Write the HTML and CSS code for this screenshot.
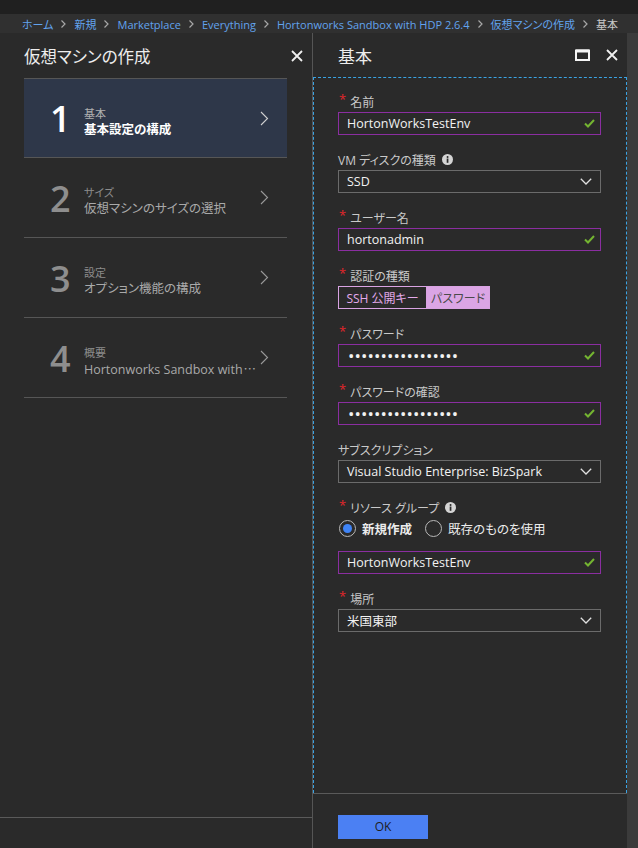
FILE: index.html
```html
<!DOCTYPE html>
<html lang="ja">
<head>
<meta charset="utf-8">
<title>仮想マシンの作成</title>
<link rel="stylesheet" href="styles.css">
</head>
<body>
<div class="app">
  <div class="topbar"></div>
  <nav class="crumbs">
    <a class="crumb">ホーム</a><span class="sep"><svg width="5" height="8" viewBox="0 0 5 8"><path d="M0.5 0.5 L4 4 L0.5 7.5" fill="none" stroke="#a8a8a8" stroke-width="1.2"/></svg></span>
    <a class="crumb">新規</a><span class="sep"><svg width="5" height="8" viewBox="0 0 5 8"><path d="M0.5 0.5 L4 4 L0.5 7.5" fill="none" stroke="#a8a8a8" stroke-width="1.2"/></svg></span>
    <a class="crumb">Marketplace</a><span class="sep"><svg width="5" height="8" viewBox="0 0 5 8"><path d="M0.5 0.5 L4 4 L0.5 7.5" fill="none" stroke="#a8a8a8" stroke-width="1.2"/></svg></span>
    <a class="crumb">Everything</a><span class="sep"><svg width="5" height="8" viewBox="0 0 5 8"><path d="M0.5 0.5 L4 4 L0.5 7.5" fill="none" stroke="#a8a8a8" stroke-width="1.2"/></svg></span>
    <a class="crumb">Hortonworks Sandbox with HDP 2.6.4</a><span class="sep"><svg width="5" height="8" viewBox="0 0 5 8"><path d="M0.5 0.5 L4 4 L0.5 7.5" fill="none" stroke="#a8a8a8" stroke-width="1.2"/></svg></span>
    <a class="crumb">仮想マシンの作成</a><span class="sep"><svg width="5" height="8" viewBox="0 0 5 8"><path d="M0.5 0.5 L4 4 L0.5 7.5" fill="none" stroke="#a8a8a8" stroke-width="1.2"/></svg></span>
    <span class="crumb current">基本</span>
  </nav>
  <div class="main">
    <section class="blade blade-left">
      <header class="blade-head">
        <h1 class="blade-title left-title">仮想マシンの作成</h1>
        <span class="icon-btn close-left"><svg width="12" height="12" viewBox="0 0 12 12"><path d="M1 1 L11 11 M11 1 L1 11" stroke="#f0f0f0" stroke-width="1.8"/></svg></span>
      </header>
      <ol class="steps">
        <li class="step active">
          <span class="step-num">1</span>
          <div class="step-text"><span class="step-kicker">基本</span><span class="step-main">基本設定の構成</span></div>
          <svg class="step-chev" width="9" height="15" viewBox="0 0 9 15"><path d="M1 1 L7.5 7.5 L1 14" fill="none" stroke="#d0d0d0" stroke-width="1.1"/></svg>
        </li>
        <li class="step">
          <span class="step-num">2</span>
          <div class="step-text"><span class="step-kicker">サイズ</span><span class="step-main">仮想マシンのサイズの選択</span></div>
          <svg class="step-chev" width="9" height="15" viewBox="0 0 9 15"><path d="M1 1 L7.5 7.5 L1 14" fill="none" stroke="#9a9a9a" stroke-width="1.1"/></svg>
        </li>
        <li class="step">
          <span class="step-num">3</span>
          <div class="step-text"><span class="step-kicker">設定</span><span class="step-main">オプション機能の構成</span></div>
          <svg class="step-chev" width="9" height="15" viewBox="0 0 9 15"><path d="M1 1 L7.5 7.5 L1 14" fill="none" stroke="#9a9a9a" stroke-width="1.1"/></svg>
        </li>
        <li class="step">
          <span class="step-num">4</span>
          <div class="step-text"><span class="step-kicker">概要</span><span class="step-main">Hortonworks Sandbox with<span class="ell">…</span></span></div>
          <svg class="step-chev" width="9" height="15" viewBox="0 0 9 15"><path d="M1 1 L7.5 7.5 L1 14" fill="none" stroke="#9a9a9a" stroke-width="1.1"/></svg>
        </li>
      </ol>
      <div class="left-spacer"></div>
      <div class="left-foot"></div>
    </section>
    <div class="divider"></div>
    <section class="blade blade-right">
      <header class="blade-head right-head">
        <h2 class="blade-title right-title">基本</h2>
        <div class="head-icons">
          <span class="icon-btn"><svg width="15" height="12" viewBox="0 0 15 12"><rect x="1" y="1.5" width="13" height="9.5" fill="none" stroke="#f5f5f5" stroke-width="2"/><rect x="1" y="0.5" width="13" height="3" fill="#f5f5f5"/></svg></span>
          <span class="icon-btn"><svg width="12" height="12" viewBox="0 0 12 12"><path d="M1 1 L11 11 M11 1 L1 11" stroke="#f0f0f0" stroke-width="1.8"/></svg></span>
        </div>
      </header>
      <div class="form-area">
        <div class="field">
          <label class="label"><span class="req">*</span>名前</label>
          <div class="input valid"><span class="value">HortonWorksTestEnv</span><svg class="check" width="11" height="9" viewBox="0 0 11 9"><path d="M1 4.5 L4 7.5 L10 1" fill="none" stroke="#74b531" stroke-width="2"/></svg></div>
        </div>
        <div class="field">
          <label class="label plain">VM ディスクの種類<svg class="info" width="11" height="11" viewBox="0 0 11 11"><circle cx="5.5" cy="5.5" r="5.5" fill="#d4d4d4"/><rect x="4.7" y="4.5" width="1.7" height="4.3" fill="#2a2a2a"/><circle cx="5.55" cy="2.9" r="1" fill="#2a2a2a"/></svg></label>
          <div class="input select"><span class="value">SSD</span><svg class="chev-down" width="12" height="7" viewBox="0 0 12 7"><path d="M0.8 0.8 L6 6 L11.2 0.8" fill="none" stroke="#e0e0e0" stroke-width="1.3"/></svg></div>
        </div>
        <div class="field">
          <label class="label"><span class="req">*</span>ユーザー名</label>
          <div class="input valid"><span class="value">hortonadmin</span><svg class="check" width="11" height="9" viewBox="0 0 11 9"><path d="M1 4.5 L4 7.5 L10 1" fill="none" stroke="#74b531" stroke-width="2"/></svg></div>
        </div>
        <div class="field">
          <label class="label"><span class="req">*</span>認証の種類</label>
          <div class="toggle"><span class="opt">SSH 公開キー</span><span class="opt on">パスワード</span></div>
        </div>
        <div class="field">
          <label class="label"><span class="req">*</span>パスワード</label>
          <div class="input valid"><span class="value dots">•••••••••••••••••</span><svg class="check" width="11" height="9" viewBox="0 0 11 9"><path d="M1 4.5 L4 7.5 L10 1" fill="none" stroke="#74b531" stroke-width="2"/></svg></div>
        </div>
        <div class="field">
          <label class="label"><span class="req">*</span>パスワードの確認</label>
          <div class="input valid"><span class="value dots">•••••••••••••••••</span><svg class="check" width="11" height="9" viewBox="0 0 11 9"><path d="M1 4.5 L4 7.5 L10 1" fill="none" stroke="#74b531" stroke-width="2"/></svg></div>
        </div>
        <div class="field">
          <label class="label plain">サブスクリプション</label>
          <div class="input select"><span class="value">Visual Studio Enterprise: BizSpark</span><svg class="chev-down" width="12" height="7" viewBox="0 0 12 7"><path d="M0.8 0.8 L6 6 L11.2 0.8" fill="none" stroke="#e0e0e0" stroke-width="1.3"/></svg></div>
        </div>
        <div class="field">
          <label class="label"><span class="req">*</span>リソース グループ<svg class="info" width="11" height="11" viewBox="0 0 11 11"><circle cx="5.5" cy="5.5" r="5.5" fill="#d4d4d4"/><rect x="4.7" y="4.5" width="1.7" height="4.3" fill="#2a2a2a"/><circle cx="5.55" cy="2.9" r="1" fill="#2a2a2a"/></svg></label>
          <div class="radios">
            <span class="radio checked"><span class="dot"></span>新規作成</span>
            <span class="radio"><span class="dot"></span>既存のものを使用</span>
          </div>
          <div class="input valid"><span class="value">HortonWorksTestEnv</span><svg class="check" width="11" height="9" viewBox="0 0 11 9"><path d="M1 4.5 L4 7.5 L10 1" fill="none" stroke="#74b531" stroke-width="2"/></svg></div>
        </div>
        <div class="field">
          <label class="label"><span class="req">*</span>場所</label>
          <div class="input select"><span class="value">米国東部</span><svg class="chev-down" width="12" height="7" viewBox="0 0 12 7"><path d="M0.8 0.8 L6 6 L11.2 0.8" fill="none" stroke="#e0e0e0" stroke-width="1.3"/></svg></div>
        </div>
      </div>
      <footer class="form-foot">
        <button class="ok">OK</button>
      </footer>
    </section>
    <div class="scrollbar"></div>
  </div>
</div>
</body>
</html>
```

FILE: styles.css
```css
* { box-sizing: border-box; }
html, body { margin: 0; padding: 0; }
body {
  width: 638px;
  height: 848px;
  overflow: hidden;
  background: #2a2a2a;
  color: #e6e6e6;
  font-family: "Open Sans", "Noto Sans CJK JP", sans-serif;
  font-feature-settings: "palt" 1;
}
.app { display: flex; flex-direction: column; height: 848px; }
.topbar { height: 14px; background: #202020; flex: none; }
.crumbs {
  height: 19px;
  flex: none;
  background: #303030;
  display: flex;
  align-items: center;
  padding: 1px 0 0 22px;
  font-size: 11px;
  white-space: nowrap;
  overflow: hidden;
}
.crumb { color: #62a3ee; }
.crumb.current { color: #c8c8c8; }
.sep { display: inline-flex; align-items: center; margin: 0 8px; }

.main { flex: 1; display: flex; min-height: 0; }
.blade { display: flex; flex-direction: column; }
.blade-left { width: 312px; flex: none; }
.divider { width: 1px; background: #555; flex: none; }
.blade-right { width: 314px; flex: none; }
.scrollbar { width: 11px; background: #3b3b3b; flex: none; }

.blade-head {
  display: flex;
  align-items: center;
  justify-content: space-between;
  height: 45px;
  flex: none;
  padding: 0 10px 0 24px;
}
.blade-title { margin: 0; font-weight: 400; color: #ededed; }
.left-title { font-size: 16.5px; }
.right-head { height: 44px; padding: 0 9px 0 25px; }
.right-title { font-size: 17px; }
.icon-btn { display: inline-flex; align-items: center; }
.close-left { margin-right: -1px; }
.head-icons { display: flex; gap: 16px; align-items: center; }

.steps { list-style: none; margin: 0; padding: 0 25px 0 24px; }
.step {
  height: 80px;
  display: flex;
  align-items: center;
  border-bottom: 1px solid #565656;
  padding-left: 26px;
  color: #8e8e8e;
}
.step:first-child { border-top: 1px solid #565656; }
.step.active { background: #2e3749; color: #fff; }
.step-num {
  width: 34px;
  font-size: 36px;
  font-weight: 600;
  line-height: 1;
  margin-top: 2px;
}
.step-text { display: flex; flex-direction: column; width: 172px; margin-top: 7px; }
.step-kicker { font-size: 11px; line-height: 15px; color: #8c8c8c; }
.step.active .step-kicker { color: #b0b0b0; }
.step-main {
  font-size: 12.5px;
  line-height: 17px;
  color: #a9a9a9;
  white-space: nowrap;
}
.ell { font-family: "Noto Sans CJK JP", sans-serif; margin-left: 1px; }
.step.active .step-main { color: #fff; font-weight: 600; }
.step-chev { margin-left: 4px; }

.left-spacer { flex: 1; }
.left-foot { height: 31px; border-top: 1px solid #5a5a5a; flex: none; }

.form-area {
  flex: 1;
  border: 1px dashed #3aa3e3;
  border-bottom: none;
  padding: 12px 25px 0 24px;
}
.field { margin-bottom: 13px; }
.label {
  display: flex;
  align-items: center;
  height: 22px;
  padding-top: 1px;
  font-size: 12px;
  color: #c9c9c9;
}
.req {
  color: #e3262b;
  font-size: 13px;
  margin: 0 4px 0 1px;
  position: relative;
  top: -3px;
}
.info { margin-left: 6px; }
.input {
  height: 23px;
  display: flex;
  align-items: center;
  justify-content: space-between;
  padding: 0 5px 0 8px;
  border: 1px solid #6b6b6b;
  font-size: 12.5px;
  color: #f2f2f2;
}
.input.valid { border-color: #8b2ea1; }
.input.select { padding-right: 8px; }
.value { white-space: nowrap; }
.dots { font-size: 17px; letter-spacing: 0.1px; line-height: 1; margin-left: 1px; }
.toggle { display: flex; height: 23px; }
.opt {
  display: flex;
  align-items: center;
  justify-content: center;
  font-size: 12px;
  border: 1px solid #d9a3e3;
  color: #e4aaec;
  width: 89px;
}
.opt.on { width: 63px; background: #dba5e5; color: #4a4a4a; border-left: none; }
.radios { display: flex; align-items: center; height: 20px; margin-bottom: 13px; gap: 12px; }
.radio { display: flex; align-items: center; font-size: 12.5px; color: #ececec; }
.radio .dot {
  width: 17px;
  height: 17px;
  border: 1px solid #b8b8b8;
  border-radius: 50%;
  margin: 0 6px 0 1px;
  display: inline-flex;
  align-items: center;
  justify-content: center;
}
.radio.checked { font-weight: 600; }
.radio.checked .dot::after {
  content: "";
  width: 9px;
  height: 9px;
  border-radius: 50%;
  background: #3f84f6;
}
.form-foot {
  height: 55px;
  flex: none;
  border-top: 1px solid #5a5a5a;
  padding: 20px 0 0 25px;
}
.ok {
  width: 90px;
  height: 24px;
  border: none;
  background: #4b80f3;
  color: #1e1e1e;
  font-family: "Open Sans", sans-serif;
  font-size: 12px;
  padding: 0;
}
```
